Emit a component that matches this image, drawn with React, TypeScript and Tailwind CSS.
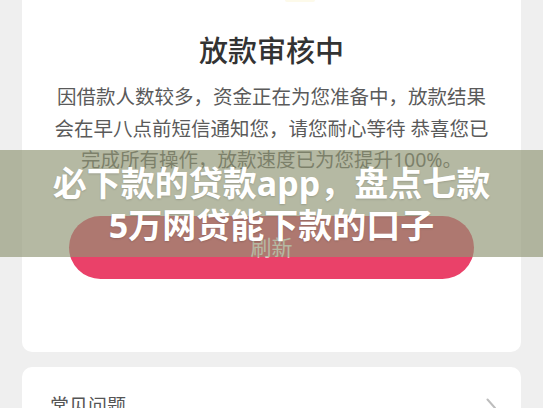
export default function App() {
  return (
    <div
      className="relative w-[543px] h-[408px] overflow-hidden bg-[#efefef]"
      style={{ fontFamily: '"Noto Sans", "Noto Sans CJK SC", sans-serif' }}
    >
      <div className="px-[22px]">
        <div className="bg-white rounded-b-[10px] h-[352px] flex flex-col items-center">
          <div className="w-[30px] h-[2px] ml-[56px] rounded-b-full bg-[#fdfaea]"></div>
          <h1 className="mt-[30.5px] text-[29px] leading-[36px] font-medium text-[#333]">放款审核中</h1>
          <p className="mt-[12.75px] w-[440px] text-center text-[19.5px] leading-[31.5px] text-[#5a5a5a]">
            因借款人数较多，资金正在为您准备中，放款结果会在早八点前短信通知您，请您耐心等待 恭喜您已完成所有操作，放款速度已为您提升100%。
          </p>
          <button className="mt-[40px] w-[405px] h-[63px] rounded-full bg-[#ea4169] text-white text-[21px]">
            刷新
          </button>
        </div>
        <div className="mt-[15px] bg-white rounded-[10px] h-[80px] flex items-start justify-between pt-[26px] pl-[28px] pr-[24px]">
          <span className="text-[19px] leading-[26px] text-[#555]">常见问题</span>
          <svg width="11" height="20" viewBox="0 0 11 20" className="mt-[5px]">
            <path d="M1.5 1.5 L9 10 L1.5 18.5" fill="none" stroke="#bdbdbd" strokeWidth="2" strokeLinecap="round" strokeLinejoin="round" />
          </svg>
        </div>
      </div>

      <div className="absolute left-0 top-[150px] w-full h-[107px] bg-[rgba(143,149,116,0.66)] flex items-center justify-center">
        <p className="text-white font-bold text-[34px] leading-[42px] text-center [text-shadow:0_1px_2px_rgba(0,0,0,0.15)]">
          必下款的贷款app，盘点七款
          <br />
          5万网贷能下款的口子
        </p>
      </div>
    </div>
  );
}
